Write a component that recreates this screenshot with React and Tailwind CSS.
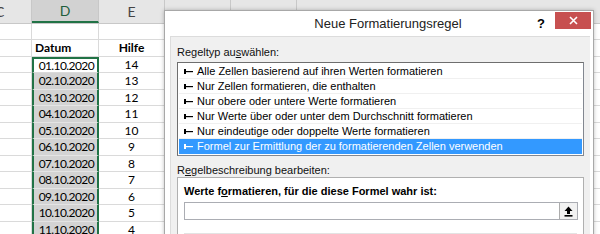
import React from "react";

const rows = [
  { d: "", e: "" },
  { d: "Datum", e: "Hilfe", head: true },
  { d: "01.10.2020", e: "14" },
  { d: "02.10.2020", e: "13" },
  { d: "03.10.2020", e: "12" },
  { d: "04.10.2020", e: "11" },
  { d: "05.10.2020", e: "10" },
  { d: "06.10.2020", e: "9" },
  { d: "07.10.2020", e: "8" },
  { d: "08.10.2020", e: "7" },
  { d: "09.10.2020", e: "6" },
  { d: "10.10.2020", e: "5" },
  { d: "11.10.2020", e: "4" },
];

const rules = [
  "Alle Zellen basierend auf ihren Werten formatieren",
  "Nur Zellen formatieren, die enthalten",
  "Nur obere oder untere Werte formatieren",
  "Nur Werte über oder unter dem Durchschnitt formatieren",
  "Nur eindeutige oder doppelte Werte formatieren",
  "Formel zur Ermittlung der zu formatierenden Zellen verwenden",
];

const RuleArrow = ({ light }) => (
  <svg width="9" height="7" viewBox="0 0 9 7" className="shrink-0">
    <rect x="0" y="1" width="2" height="5" fill={light ? "#fff" : "#000"} />
    <rect x="1" y="3" width="8" height="1.2" fill={light ? "#fff" : "#000"} />
  </svg>
);

const Sheet = () => (
  <div className="flex flex-col font-['Lato','Liberation_Sans',sans-serif] text-[12px] tracking-[-0.6px] text-black">
    {/* column headers */}
    <div className="flex h-[24px] bg-[#e6e6e6] border-b border-[#c8c8c8] tracking-normal">
      <div className="w-[32px] shrink-0 border-r border-[#c8c8c8] flex items-center justify-start text-[14px] text-[#444] overflow-hidden">
        <span className="-ml-[5px]">C</span>
      </div>
      <div className="w-[67px] shrink-0 bg-[#d2d2d2] border-r border-[#c8c8c8] border-b-2 border-b-[#217346] flex items-center justify-center text-[14px] text-[#1e5e3c]">
        D
      </div>
      <div className="w-[66px] shrink-0 border-r border-[#c8c8c8] flex items-center justify-center text-[14px] text-[#444]">
        E
      </div>
      <div className="w-[66px] shrink-0 border-r border-[#c8c8c8]" />
      <div className="w-[66px] shrink-0 border-r border-[#c8c8c8]" />
      <div className="flex-1" />
    </div>
    {/* rows */}
    <div className="flex flex-col w-full">
      {rows.map((r, i) => {
        const sel = i >= 2;
        const gray = i >= 3;
        return (
          <div key={i} className={`flex ${i % 2 === 0 ? "h-[16px]" : "h-[17px]"}`}>
            <div className="w-[32px] shrink-0 border-r border-b border-[#dadada]" />
            <div
              className={`w-[67px] shrink-0 flex items-center leading-none ${
                r.head ? "justify-start pl-[3px] font-bold text-[12px] tracking-normal" : "justify-end pr-[3px]"
              } ${gray ? "bg-[#d3d3d3] border-b border-[#e4e4e4]" : "border-b border-[#dadada]"} ${
                sel ? "border-x-2 border-x-[#217346]" : "border-r border-[#dadada]"
              } ${i === 2 ? "border-t-2 border-t-[#217346]" : ""}`}
            >
              {r.d}
            </div>
            <div
              className={`w-[66px] shrink-0 flex items-center justify-center leading-none border-r border-b border-[#dadada] ${
                r.head ? "font-bold text-[12px] tracking-normal" : "text-[12px] tracking-normal"
              }`}
            >
              {r.e}
            </div>
            <div className="w-[66px] shrink-0 border-r border-b border-[#dadada]" />
            <div className="w-[66px] shrink-0 border-r border-b border-[#dadada]" />
            <div className="flex-1 border-b border-[#dadada]" />
          </div>
        );
      })}
    </div>
  </div>
);

const Dialog = () => (
  <div className="absolute left-[164px] top-[10px] w-[430px] h-[240px] bg-white border border-[#a8a8a8] shadow-[0_0_4px_rgba(0,0,0,0.25)] flex flex-col font-['Liberation_Sans','Noto_Sans',sans-serif] text-black">
    {/* title bar */}
    <div className="h-[25px] shrink-0 flex items-center relative">
      <div className="flex-1 text-center text-[13px] text-[#222] pl-[84px]">Neue Formatierungsregel</div>
      <div className="w-[28px] text-center text-[13px] font-bold">?</div>
      <div className="w-[36px] h-[17px] mr-[2px] bg-[#c75050] flex items-center justify-center self-start mt-[1px]">
        <svg width="9" height="9" viewBox="0 0 9 9">
          <path d="M1 1 L8 8 M8 1 L1 8" stroke="#fff" strokeWidth="1.6" />
        </svg>
      </div>
    </div>
    {/* body */}
    <div className="flex-1 ml-[5px] mr-[3px] bg-[#f0f0f0] border-t border-l border-[#dcdcdc] px-[6px] pt-[9px] flex flex-col">
      <div className="text-[11px] leading-[13px] text-[#111]">
        Regeltyp au<span className="underline">s</span>wählen:
      </div>
      <div className="mt-[3px] h-[94px] bg-white border border-[#828790] border-t-[#6e6e6e] border-l-[#6e6e6e] p-[1px] flex flex-col">
        {rules.map((t, i) => {
          const active = i === rules.length - 1;
          return (
            <div
              key={i}
              className={`h-[15px] flex items-center gap-[4px] pl-[5px] text-[11px] leading-none ${
                active ? "bg-[#3399ff] text-white" : "border-b border-[#f0f0f0]"
              }`}
            >
              <RuleArrow light={active} />
              <span>{t}</span>
            </div>
          );
        })}
      </div>
      <div className="mt-[8px] text-[11px] leading-[13px] text-[#111]">
        R<span className="underline">e</span>gelbeschreibung bearbeiten:
      </div>
      <div className="flex-1 bg-white border border-[#b0b0b0] px-[6px] pt-[7px]">
        <div className="text-[11px] leading-[13px] font-bold">
          Werte f<span className="underline">o</span>rmatieren, für die diese Formel wahr ist:
        </div>
        <div className="mt-[4px] h-[18px] w-[394px] border border-[#abadb3] bg-white flex justify-end">
          <div className="w-[18px] h-full bg-[#f2f2f2] border-l border-[#acacac] flex items-center justify-center">
            <svg width="9" height="11" viewBox="0 0 9 11">
              <path d="M4.5 0.5 L8.5 5 L6 5 L6 8 L3 8 L3 5 L0.5 5 Z" fill="#000" />
              <rect x="0.5" y="9" width="8" height="1.6" fill="#000" />
            </svg>
          </div>
        </div>
        <div className="mt-[13px] border-t border-[#e3e3e3]" />
      </div>
    </div>
  </div>
);

export default function App() {
  return (
    <div className="relative w-[600px] h-[234px] overflow-hidden bg-white">
      <Sheet />
      <Dialog />
    </div>
  );
}
